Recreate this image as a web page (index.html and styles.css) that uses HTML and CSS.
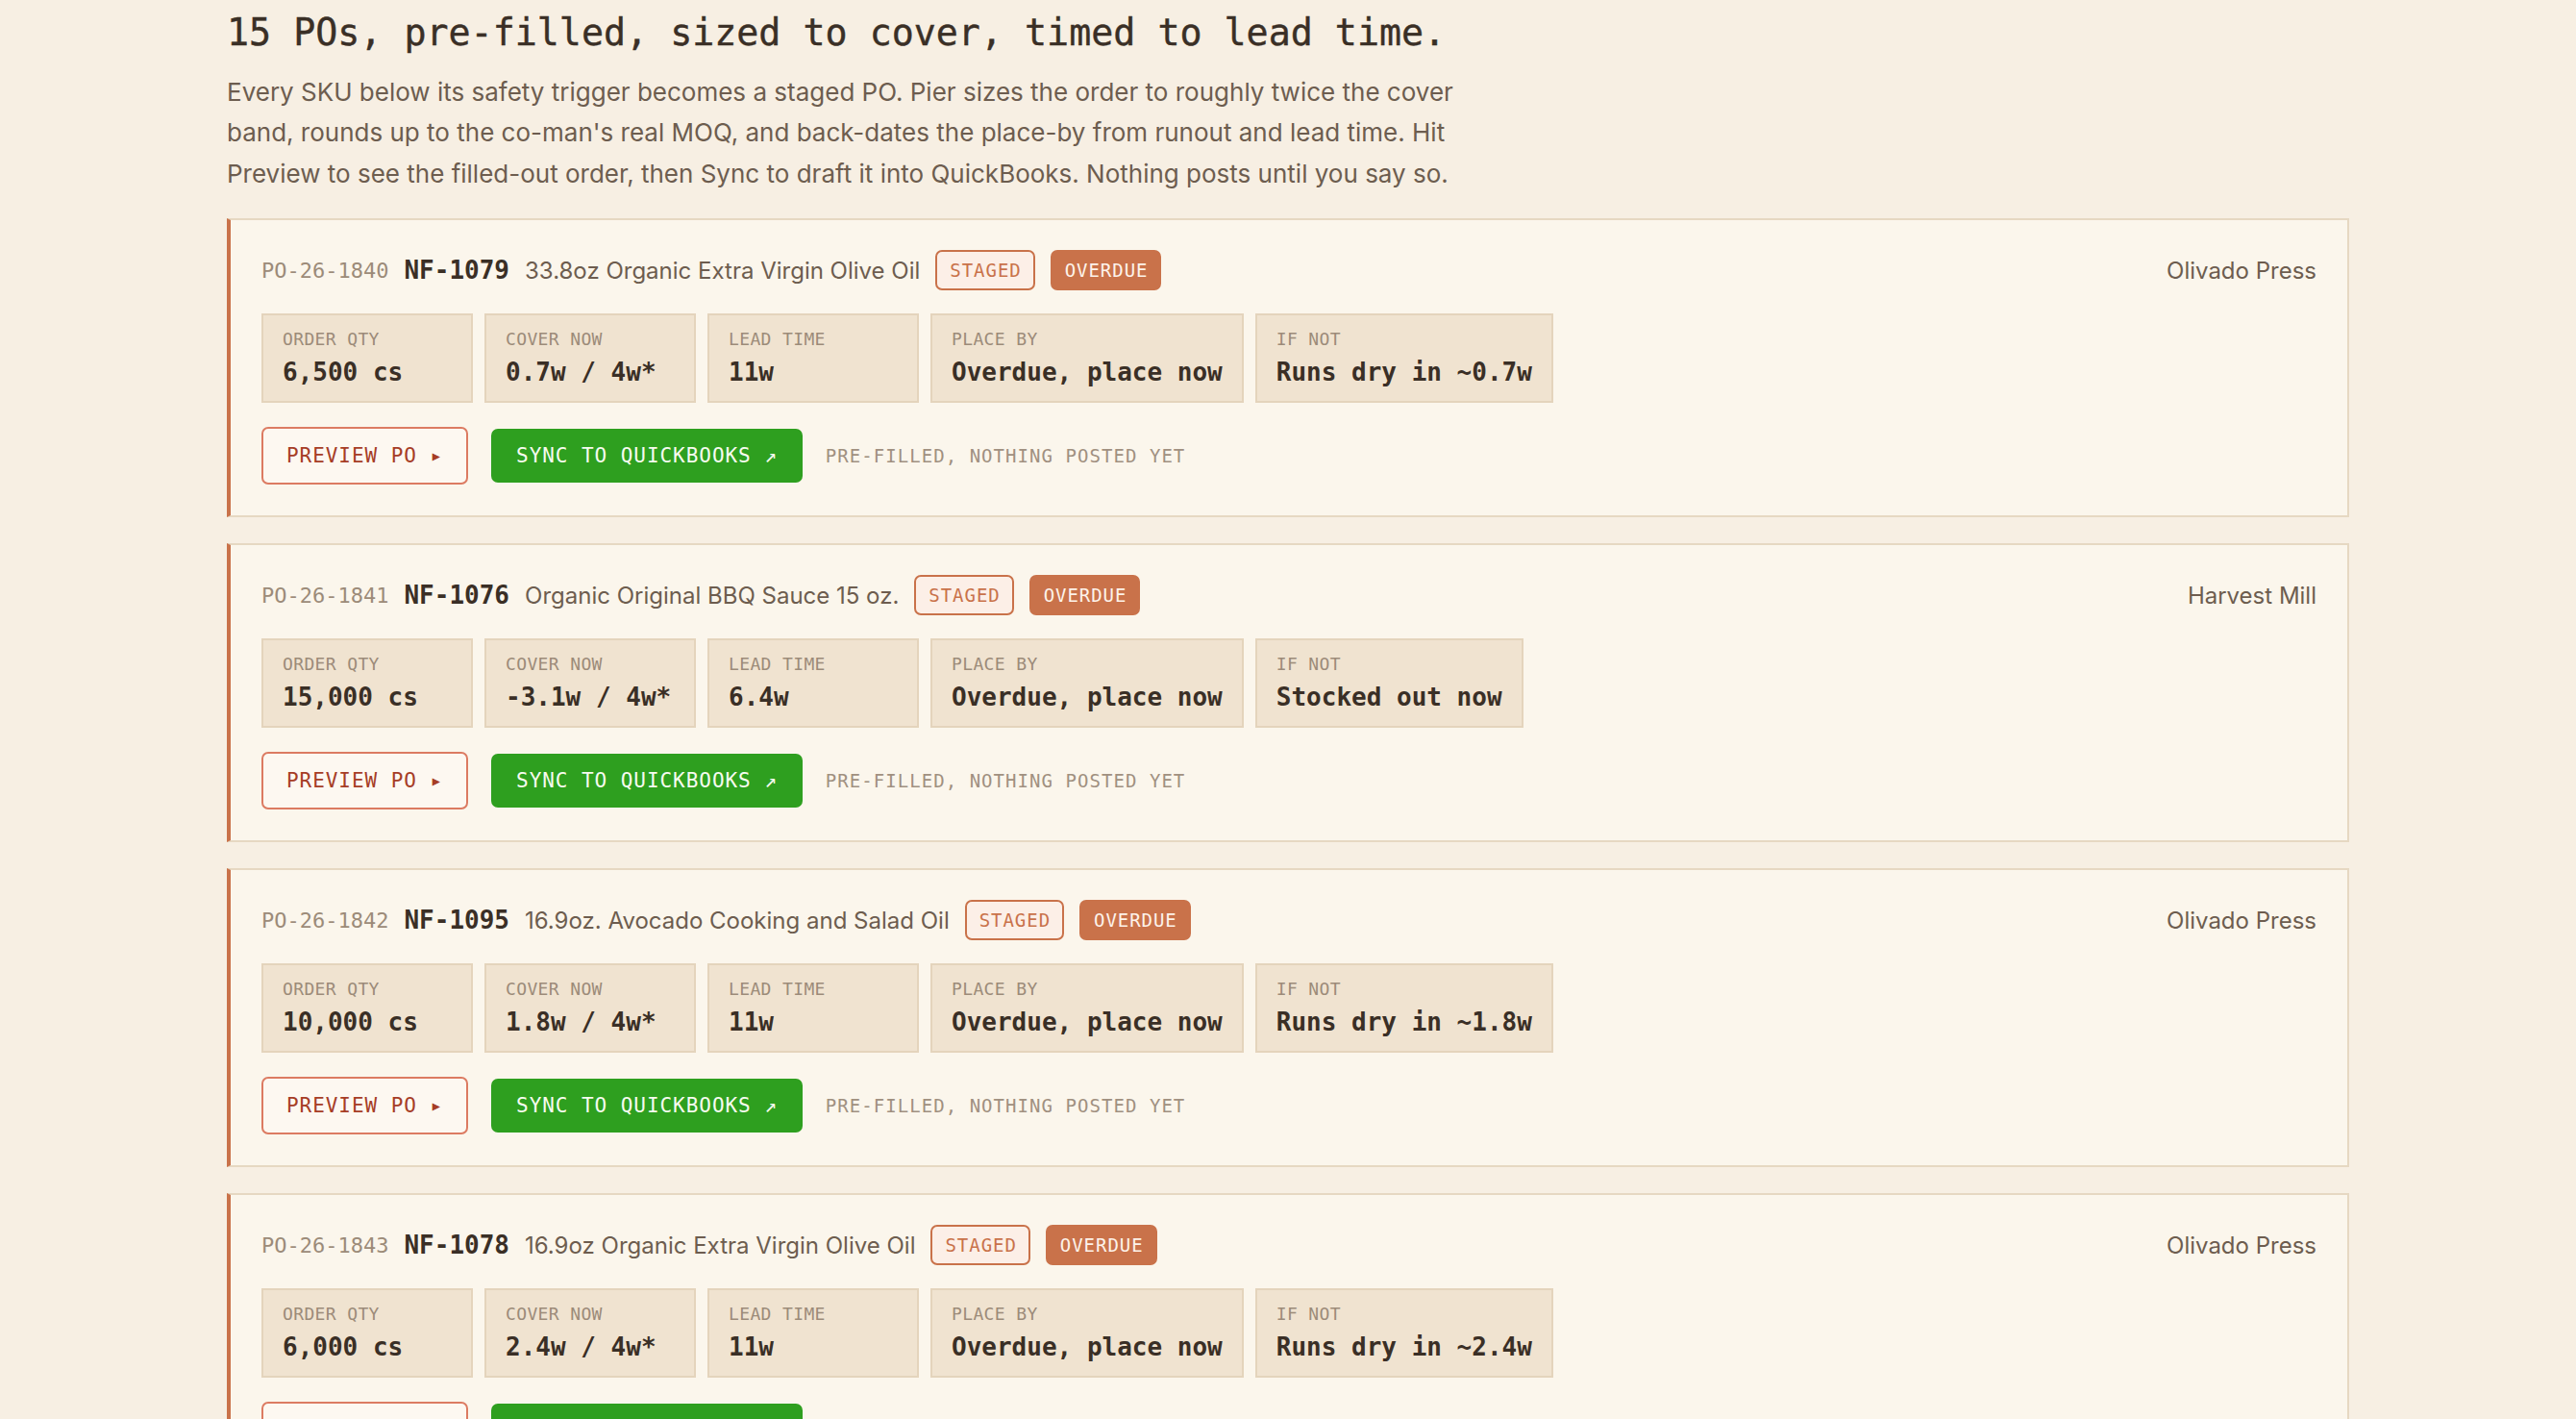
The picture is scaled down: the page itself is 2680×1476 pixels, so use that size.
FILE: index.html
```html
<!DOCTYPE html>
<html lang="en">
<head>
<meta charset="utf-8">
<title>Staged POs</title>
<link rel="stylesheet" href="styles.css">
</head>
<body>
<main class="page">
  <h1 class="title">15 POs, pre-filled, sized to cover, timed to lead time.</h1>
  <p class="intro">Every SKU below its safety trigger becomes a staged PO. Pier sizes the order to roughly twice the cover band, rounds up to the co-man's real MOQ, and back-dates the place-by from runout and lead time. Hit Preview to see the filled-out order, then Sync to draft it into QuickBooks. Nothing posts until you say so.</p>

  <section class="list">
    <article class="card">
      <div class="head">
        <span class="po">PO-26-1840</span>
        <span class="sku">NF-1079</span>
        <span class="name">33.8oz Organic Extra Virgin Olive Oil</span>
        <span class="badge staged">STAGED</span>
        <span class="badge overdue">OVERDUE</span>
        <span class="supplier">Olivado Press</span>
      </div>
      <div class="stats">
        <div class="stat"><div class="label">ORDER QTY</div><div class="value">6,500 cs</div></div>
        <div class="stat"><div class="label">COVER NOW</div><div class="value">0.7w / 4w*</div></div>
        <div class="stat"><div class="label">LEAD TIME</div><div class="value">11w</div></div>
        <div class="stat"><div class="label">PLACE BY</div><div class="value">Overdue, place now</div></div>
        <div class="stat"><div class="label">IF NOT</div><div class="value">Runs dry in ~0.7w</div></div>
      </div>
      <div class="actions">
        <button class="btn preview">PREVIEW PO ▸</button>
        <button class="btn sync">SYNC TO QUICKBOOKS ↗</button>
        <span class="note">PRE-FILLED, NOTHING POSTED YET</span>
      </div>
    </article>

    <article class="card">
      <div class="head">
        <span class="po">PO-26-1841</span>
        <span class="sku">NF-1076</span>
        <span class="name">Organic Original BBQ Sauce 15 oz.</span>
        <span class="badge staged">STAGED</span>
        <span class="badge overdue">OVERDUE</span>
        <span class="supplier">Harvest Mill</span>
      </div>
      <div class="stats">
        <div class="stat"><div class="label">ORDER QTY</div><div class="value">15,000 cs</div></div>
        <div class="stat"><div class="label">COVER NOW</div><div class="value">-3.1w / 4w*</div></div>
        <div class="stat"><div class="label">LEAD TIME</div><div class="value">6.4w</div></div>
        <div class="stat"><div class="label">PLACE BY</div><div class="value">Overdue, place now</div></div>
        <div class="stat"><div class="label">IF NOT</div><div class="value">Stocked out now</div></div>
      </div>
      <div class="actions">
        <button class="btn preview">PREVIEW PO ▸</button>
        <button class="btn sync">SYNC TO QUICKBOOKS ↗</button>
        <span class="note">PRE-FILLED, NOTHING POSTED YET</span>
      </div>
    </article>

    <article class="card">
      <div class="head">
        <span class="po">PO-26-1842</span>
        <span class="sku">NF-1095</span>
        <span class="name">16.9oz. Avocado Cooking and Salad Oil</span>
        <span class="badge staged">STAGED</span>
        <span class="badge overdue">OVERDUE</span>
        <span class="supplier">Olivado Press</span>
      </div>
      <div class="stats">
        <div class="stat"><div class="label">ORDER QTY</div><div class="value">10,000 cs</div></div>
        <div class="stat"><div class="label">COVER NOW</div><div class="value">1.8w / 4w*</div></div>
        <div class="stat"><div class="label">LEAD TIME</div><div class="value">11w</div></div>
        <div class="stat"><div class="label">PLACE BY</div><div class="value">Overdue, place now</div></div>
        <div class="stat"><div class="label">IF NOT</div><div class="value">Runs dry in ~1.8w</div></div>
      </div>
      <div class="actions">
        <button class="btn preview">PREVIEW PO ▸</button>
        <button class="btn sync">SYNC TO QUICKBOOKS ↗</button>
        <span class="note">PRE-FILLED, NOTHING POSTED YET</span>
      </div>
    </article>

    <article class="card">
      <div class="head">
        <span class="po">PO-26-1843</span>
        <span class="sku">NF-1078</span>
        <span class="name">16.9oz Organic Extra Virgin Olive Oil</span>
        <span class="badge staged">STAGED</span>
        <span class="badge overdue">OVERDUE</span>
        <span class="supplier">Olivado Press</span>
      </div>
      <div class="stats">
        <div class="stat"><div class="label">ORDER QTY</div><div class="value">6,000 cs</div></div>
        <div class="stat"><div class="label">COVER NOW</div><div class="value">2.4w / 4w*</div></div>
        <div class="stat"><div class="label">LEAD TIME</div><div class="value">11w</div></div>
        <div class="stat"><div class="label">PLACE BY</div><div class="value">Overdue, place now</div></div>
        <div class="stat"><div class="label">IF NOT</div><div class="value">Runs dry in ~2.4w</div></div>
      </div>
      <div class="actions">
        <button class="btn preview">PREVIEW PO ▸</button>
        <button class="btn sync">SYNC TO QUICKBOOKS ↗</button>
        <span class="note">PRE-FILLED, NOTHING POSTED YET</span>
      </div>
    </article>
  </section>
</main>
</body>
</html>
```

FILE: styles.css
```css
* { box-sizing: border-box; }

html, body {
  margin: 0;
  padding: 0;
  background: #f7efe3;
}

body {
  font-family: "Inter", "Noto Sans", sans-serif;
  color: #3a2f26;
}

.page {
  width: 2208px;
  margin: 0 auto;
  padding-top: 11px;
}

.title {
  margin: 0;
  font-family: "DejaVu Sans Mono", "Liberation Mono", monospace;
  font-weight: normal;
  font-size: 38.3px;
  line-height: 1.2;
  color: #3a2f26;
  -webkit-text-stroke: 0.4px #3a2f26;
}

.intro {
  margin: 18px 0 0;
  max-width: 1310px;
  font-size: 26px;
  line-height: 42.5px;
  color: #6d5d4f;
}

.list {
  margin-top: 25px;
  display: flex;
  flex-direction: column;
  gap: 27px;
}

.card {
  background: #fbf6ec;
  border: 2px solid #e6d8c2;
  border-left: 4px solid #c9724a;
  padding: 31px 32px 32px 32px;
  display: flex;
  flex-direction: column;
  gap: 24px;
}

.head {
  display: flex;
  align-items: center;
  gap: 16px;
  height: 42px;
}

.po {
  font-family: "DejaVu Sans Mono", "Liberation Mono", monospace;
  font-size: 22px;
  color: #9c8b79;
}

.sku {
  font-family: "DejaVu Sans Mono", "Liberation Mono", monospace;
  font-size: 26px;
  font-weight: bold;
  color: #3a2f26;
}

.name {
  font-size: 24px;
  color: #6d5d4f;
}

.badge {
  font-family: "DejaVu Sans Mono", "Liberation Mono", monospace;
  font-size: 19px;
  letter-spacing: 0.05em;
  line-height: 38px;
  padding: 0 12px 0 13px;
  border: 2px solid #c9724a;
  border-radius: 7px;
}

.badge.staged {
  background: #fcefe7;
  color: #c9724a;
}

.badge.overdue {
  background: #c9724a;
  color: #fdf3ea;
}

.supplier {
  margin-left: auto;
  font-size: 24px;
  color: #6d5d4f;
}

.stats {
  display: flex;
  gap: 12px;
}

.stat {
  min-width: 220px;
  background: #f0e3d0;
  border: 2px solid #e4d4bc;
  padding: 14px 20px;
  display: flex;
  flex-direction: column;
  gap: 7px;
  font-family: "DejaVu Sans Mono", "Liberation Mono", monospace;
}

.label {
  font-size: 18px;
  line-height: 22px;
  letter-spacing: 0.02em;
  color: #9c8b79;
}

.value {
  font-size: 26px;
  line-height: 32px;
  font-weight: bold;
  color: #3a2f26;
  white-space: nowrap;
}

.actions {
  display: flex;
  align-items: center;
  gap: 24px;
  margin-top: 1px;
}

.btn {
  font-family: "DejaVu Sans Mono", "Liberation Mono", monospace;
  font-size: 21px;
  letter-spacing: 0.045em;
  line-height: 32px;
  border-radius: 7px;
  cursor: pointer;
}

.btn.preview {
  background: #fdf8f1;
  color: #a63d26;
  border: 2px solid #dc7b62;
  padding: 12px 24px;
}

.btn.sync {
  background: #2e9f1f;
  color: #f6fbef;
  border: 0;
  padding: 12px 26px;
}

.note {
  font-family: "DejaVu Sans Mono", "Liberation Mono", monospace;
  font-size: 19px;
  letter-spacing: 0.055em;
  color: #a09080;
}
```
